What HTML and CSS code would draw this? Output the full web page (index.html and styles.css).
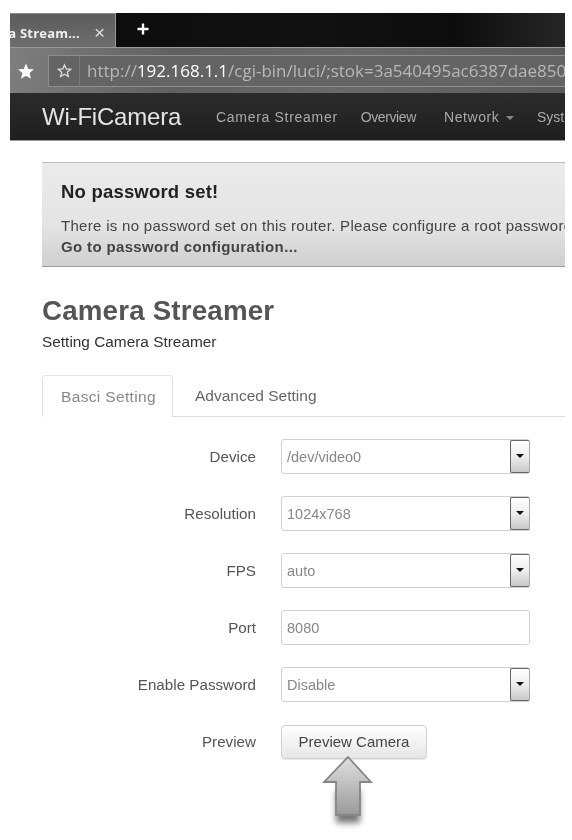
FILE: index.html
```html
<!DOCTYPE html>
<html lang="en">
<head>
<meta charset="utf-8">
<title>Camera Streamer</title>
<link rel="stylesheet" href="styles.css">
</head>
<body>
<div class="shot">
  <div class="tabstrip">
    <div class="tab"><span class="tab-title">a Stream...</span><span class="tab-close">×</span></div>
    <svg class="newtab" width="14" height="14" viewBox="0 0 14 14"><path d="M7 1.500v11M1.500 7h11" stroke="#fff" stroke-width="2.400" fill="none"/></svg>
  </div>
  <div class="toolbar">
    <svg class="star-solid" width="18" height="18" viewBox="0 0 24 24"><path d="M12 2l3 7.200 7.600.6-5.800 5 1.800 7.500L12 18.200 5.400 22.300l1.800-7.500-5.800-5 7.600-.6z" fill="#fff"/></svg>
    <div class="urlbox">
      <span class="urlstar"><svg width="15" height="15" viewBox="0 0 24 24"><path d="M12 3l2.800 6.500 7 .6-5.300 4.600 1.600 6.900-6.100-3.600-6.100 3.600 1.600-6.900-5.300-4.600 7-.6z" fill="none" stroke="#ddd" stroke-width="2"/></svg></span>
      <span class="url">http://<b>192.168.1.1</b>/cgi-bin/luci/;stok=3a540495ac6387dae850</span>
    </div>
  </div>
  <nav class="navbar">
    <span class="brand">Wi-FiCamera</span>
    <span class="navlink nav-camera">Camera Streamer</span>
    <span class="navlink nav-overview">Overview</span>
    <span class="navlink nav-network">Network <i class="caret"></i></span>
    <span class="navlink">System</span>
  </nav>
  <main class="content">
    <section class="alert">
      <h4>No password set!</h4>
      <p>There is no password set on this router. Please configure a root password to protect the web interface</p>
      <a href="#">Go to password configuration...</a>
    </section>
    <h2>Camera Streamer</h2>
    <p class="sub">Setting Camera Streamer</p>
    <div class="tabs">
      <span class="pagetab active">Basci Setting</span>
      <span class="pagetab">Advanced Setting</span>
    </div>
    <form class="form">
      <div class="row"><label>Device</label><div class="select"><span>/dev/video0</span><i class="drop"></i></div></div>
      <div class="row"><label>Resolution</label><div class="select"><span>1024x768</span><i class="drop"></i></div></div>
      <div class="row"><label>FPS</label><div class="select"><span>auto</span><i class="drop"></i></div></div>
      <div class="row"><label>Port</label><div class="select"><span>8080</span></div></div>
      <div class="row"><label>Enable Password</label><div class="select"><span>Disable</span><i class="drop"></i></div></div>
      <div class="row"><label>Preview</label><div class="btn">Preview Camera</div></div>
    </form>
    <svg class="arrow" width="56" height="72" viewBox="0 0 56 72">
      <defs>
        <linearGradient id="ag" x1="0" y1="0" x2="0" y2="1"><stop offset="0" stop-color="#e0e0e0"/><stop offset="1" stop-color="#9a9a9a"/></linearGradient>
      </defs>
      <path class="arrow-shadow" d="M16 30h24v32H16z"/>
      <path d="M28 2L51 27H40v33H16V27H4z" fill="url(#ag)" stroke="#858585" stroke-width="1.800"/>
    </svg>
  </main>
</div>
</body>
</html>
```
FILE: styles.css
```css
* { box-sizing: border-box; }
html, body { margin: 0; background: #fff; }
body { font-family: "Liberation Sans", Arial, sans-serif; }
.shot {
  width: 565px; height: 840px; padding: 13px 0 0 10px;
  overflow: hidden; filter: blur(.35px);
}
.shot > * { width: 555px; }
.tabstrip {
  height: 34px; display: flex; align-items: flex-start;
  background: linear-gradient(90deg, #0a0a0a, #111 55%, #0c0c0c 80%, #262626);
}
.tab {
  width: 106px; height: 34px; padding: 5px 10px 0 0; display: flex; align-items: center; justify-content: flex-end;
  background: linear-gradient(#5c5c5c, #6e6e6e); border-right: 1px solid #9a9a9a; border-top: 1px solid #8a8a8a;
  color: #f0f0f0; font: 700 13px "Open Sans", sans-serif;
}
.tab-title { white-space: nowrap; letter-spacing: .2px; }
.tab-close { margin-left: 14px; font: 400 19px "Liberation Sans", sans-serif; color: #ddd; }
.newtab { margin: 9px 0 0 20px; }
.toolbar {
  height: 46px; display: flex; align-items: center; padding: 0 0 0 7px;
  background: linear-gradient(100deg, #7e7e7e, #606060 30%, #6a6a6a 60%, #5b5b5b);
  border-top: 1px solid #9a9a9a;
}
.star-solid { flex: none; }
.urlbox {
  flex: 1; height: 32px; margin-left: 13px; display: flex; align-items: center;
  border: 1px solid #8e8e8e; border-right: 0; background: #646464; white-space: nowrap; overflow: hidden;
}
.urlstar { width: 31px; height: 100%; display: flex; align-items: center; justify-content: center; border-right: 1px solid #7a7a7a; flex: none; }
.url { margin-left: 7px; font: 400 17px "Open Sans", sans-serif; color: #b8b8b8; }
.url b { font-weight: 400; color: #fff; }
.navbar {
  height: 48px; display: flex; align-items: center; padding-left: 32px; white-space: nowrap; overflow: hidden;
  background: linear-gradient(#2b2b2b, #1f1f1f); border-bottom: 1px solid #999;
}
.brand { font-size: 24px; letter-spacing: -.2px; color: #e4e4e4; width: 174px; flex: none; }
.navlink { font-size: 14px; color: #aaa; flex: none; }
.nav-camera { letter-spacing: .7px; margin-right: 23px; }
.nav-overview { letter-spacing: -.4px; margin-right: 28px; }
.nav-network { letter-spacing: .6px; margin-right: 23px; }
.caret { display: inline-block; width: 0; height: 0; margin-left: 2px; vertical-align: middle; border: 4px solid transparent; border-top-color: #888; border-bottom: 0; }
.content { padding: 21px 0 0 32px; white-space: nowrap; }
.alert {
  height: 105px; padding: 20px 0 0 19px; overflow: hidden; color: #444; font-size: 15px;
  background: linear-gradient(#ebebeb, #e4e4e4 60%, #cfcfcf); border-top: 1px solid #bdbdbd; border-bottom: 1px solid #9c9c9c;
}
.alert h4 { margin: 0 0 15px; font-size: 18.500px; line-height: 18px; letter-spacing: .2px; color: #222; }
.alert p { margin: 0; line-height: 20px; letter-spacing: .3px; }
.alert a { display: block; font-weight: 700; line-height: 22px; color: #444; text-decoration: none; letter-spacing: .35px; }
h2 { margin: 28px 0 0; font-size: 27.700px; line-height: 32px; color: #555; letter-spacing: .2px; }
.sub { margin: 5px 0 0; font-size: 15.400px; line-height: 20px; color: #333; }
.tabs { display: flex; margin-top: 23px; height: 42px; border-bottom: 1px solid #ddd; }
.pagetab { padding: 12px 18px 0; font-size: 15.500px; line-height: 17px; color: #666; }
.active { width: 131px; height: 42px; background: #fff; border: 1px solid #e2e2e2; border-bottom-color: #fff; border-radius: 4px 4px 0 0; color: #888; letter-spacing: .35px; }
.pagetab:not(.active) { padding-left: 22px; }
.form { display: flex; flex-direction: column; gap: 22px; margin-top: 22px; }
.row { display: flex; align-items: center; height: 35px; }
.row label { width: 214px; text-align: right; font-size: 15.200px; color: #555; flex: none; }
.select {
  width: 249px; height: 35px; margin-left: 25px; padding-left: 5px; display: flex; align-items: center; justify-content: space-between;
  border: 1px solid #d2d2d2; border-radius: 3px; background: #fff; font-size: 14.500px; color: #888;
}
.drop {
  position: relative; width: 20px; height: 33px; margin-right: -1px; flex: none;
  background: linear-gradient(#fff, #eee 50%, #c8c8c8); border: 1px solid #666; border-right-color: #aaa; border-radius: 2px;
}
.drop::after { content: ""; position: absolute; left: 5px; top: 13px; border: 4px solid transparent; border-top: 4px solid #111; border-bottom: 0; }
.btn {
  width: 146px; height: 34px; margin-left: 25px; display: flex; align-items: center; justify-content: center;
  border: 1px solid #d0d0d0; border-radius: 4px; font-size: 15px; color: #444;
  background: linear-gradient(#fff, #e6e6e6); box-shadow: 0 1px 1px rgba(0,0,0,.1);
}
.arrow { display: block; margin: -4px 0 0 278px; overflow: visible; }
.arrow-shadow { fill: #777; filter: blur(3px); transform: translateY(6px); }
```
